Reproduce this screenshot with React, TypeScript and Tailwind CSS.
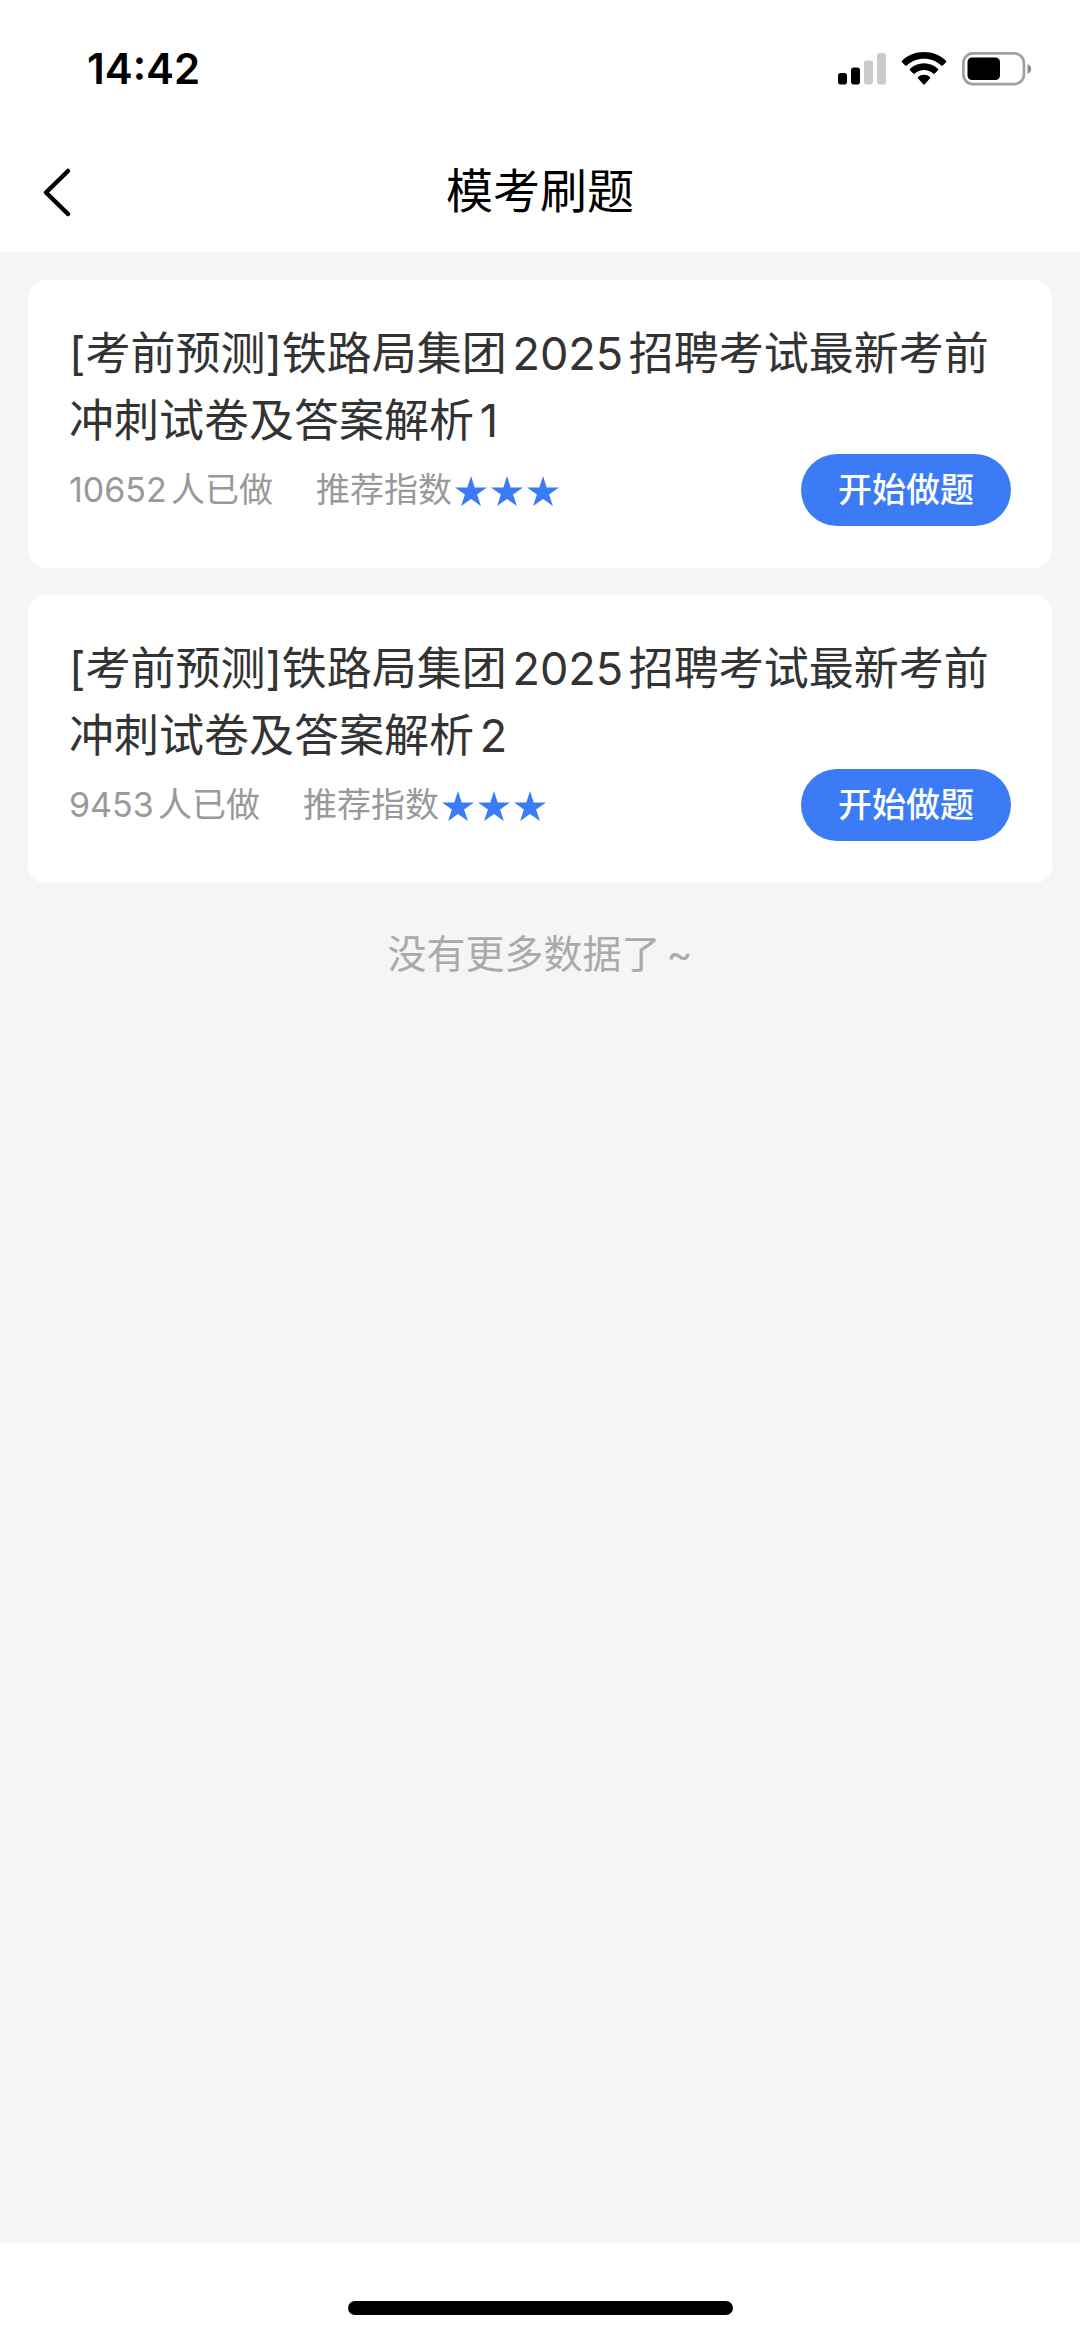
interface Paper {
  id: number;
  title: string;
  doneCount: number;
  stars: number;
}

const PAPERS: Paper[] = [
  { id: 1, title: "[考前预测]铁路局集团2025招聘考试最新考前冲刺试卷及答案解析1", doneCount: 10652, stars: 3 },
  { id: 2, title: "[考前预测]铁路局集团2025招聘考试最新考前冲刺试卷及答案解析2", doneCount: 9453, stars: 3 },
];

function SignalIcon() {
  return (
    <svg width="48" height="34" viewBox="0 0 48 34" aria-hidden="true">
      <rect x="0" y="21" width="9" height="11.5" rx="2.8" fill="#000" />
      <rect x="13" y="15.5" width="9" height="17" rx="2.8" fill="#000" />
      <rect x="26" y="8.5" width="9" height="24" rx="2.8" fill="#cbcbcb" />
      <rect x="39" y="1" width="9" height="31.5" rx="2.8" fill="#cbcbcb" />
    </svg>
  );
}

function WifiIcon() {
  return (
    <svg width="46" height="34" viewBox="0 0 46 34" aria-hidden="true">
      <path d="M23 0C31.5 0 39.3 3.3 45 8.8Q45.7 9.5 45 10.3L41.8 13.5Q41 14.2 40.2 13.5C35.7 9.3 29.6 6.8 23 6.8C16.4 6.8 10.3 9.3 5.8 13.5Q5 14.2 4.2 13.5L1 10.3Q.3 9.5 1 8.8C6.7 3.3 14.5 0 23 0Z" />
      <path d="M23 11.2C28.5 11.2 33.3 13.3 37 16.8Q37.7 17.5 37 18.3L33.8 21.5Q33 22.2 32.2 21.5C29.7 19.3 26.5 18 23 18C19.5 18 16.3 19.3 13.8 21.5Q13 22.2 12.2 21.5L9 18.3Q8.3 17.5 9 16.8C12.7 13.3 17.5 11.2 23 11.2Z" />
      <path d="M23 22.7C25.3 22.7 27.3 23.5 28.9 24.9Q29.6 25.6 28.9 26.4L23.8 32.2Q23 32.9 22.2 32.2L17.1 26.4Q16.4 25.6 17.1 24.9C18.7 23.5 20.7 22.7 23 22.7Z" />
    </svg>
  );
}

function BatteryIcon() {
  return (
    <svg width="70" height="34" viewBox="0 0 70 34" aria-hidden="true">
      <rect x="1.4" y="1.4" width="60.5" height="30.7" rx="9.5" fill="none" stroke="#a0a0a0" strokeWidth="2.7" />
      <rect x="5.5" y="5.5" width="32.5" height="22.5" rx="4.5" />
      <path d="M65.5 12.2C67.9 13 69.2 14.8 69.2 17S67.9 21 65.5 21.8Z" fill="#8c8c8c" />
    </svg>
  );
}

function StarIcon() {
  return (
    <svg width="32" height="32" viewBox="0 0 32 32" fill="#3b7cf6" aria-hidden="true">
      <path d="M16 1L19.7 12.5H32L22.1 19.6L25.9 31L16 24L6.1 31L9.9 19.6L0 12.5H12.3Z" />
    </svg>
  );
}

function PaperCard({ paper }: { paper: Paper }) {
  return (
    <li className="rounded-[18px] bg-white px-[41px] pt-10 pb-[42px]">
      <h2 className="text-[45px] leading-[67px] text-[#333]">{paper.title}</h2>
      <div className="flex items-center justify-between">
        <div className="flex items-center text-[34px] leading-[48px] text-[#999]">
          <span>{paper.doneCount}人已做</span>
          <span className="ml-[43px]">推荐指数</span>
          <span className="ml-[3px] flex gap-1 pt-[2px]" role="img" aria-label={`${paper.stars}星`}>
            {Array.from({ length: paper.stars }, (_, i) => (
              <StarIcon key={i} />
            ))}
          </span>
        </div>
        <button type="button" className="h-[72px] rounded-full bg-[#3b7cf6] px-[37px] text-[34px] leading-[48px] font-medium text-white">
          开始做题
        </button>
      </div>
    </li>
  );
}

export default function App() {
  return (
    <div className="flex min-h-screen flex-col bg-[#f5f5f5] font-['Inter','Noto_Sans_CJK_SC',sans-serif] [text-autospace:normal]">
      <header className="bg-white">
        <div className="flex h-[132px] items-center justify-between pr-12 pl-[87px]">
          <time className="pt-[6px] text-[42px] leading-[48px] font-semibold">14:42</time>
          <div className="flex items-center gap-[15px] pt-[5px]">
            <SignalIcon />
            <WifiIcon />
            <BatteryIcon />
          </div>
        </div>
        <div className="grid h-[120px] grid-cols-[1fr_auto_1fr] items-center">
          <button type="button" aria-label="返回" className="w-fit pl-[39px]">
            <svg width="36" height="52" viewBox="0 0 36 52" fill="none" stroke="#000" strokeWidth="4.5" strokeLinecap="round" strokeLinejoin="round">
              <path d="M29 5L7 26.5L29 48" />
            </svg>
          </button>
          <h1 className="pb-1 text-[47px] leading-[67px] text-black">模考刷题</h1>
        </div>
      </header>

      <main className="flex-1 p-7">
        <ul className="flex flex-col gap-[27px]">
          {PAPERS.map((paper) => (
            <PaperCard key={paper.id} paper={paper} />
          ))}
        </ul>
        <p className="mt-10 text-center text-[39px] leading-[62px] text-[#aaa]">
          没有更多数据了<span className="ml-[6px]">~</span>
        </p>
      </main>

      <footer className="flex h-[94px] justify-center bg-white pt-[58px]">
        <div className="h-[14px] w-[385px] rounded-full bg-black" />
      </footer>
    </div>
  );
}
